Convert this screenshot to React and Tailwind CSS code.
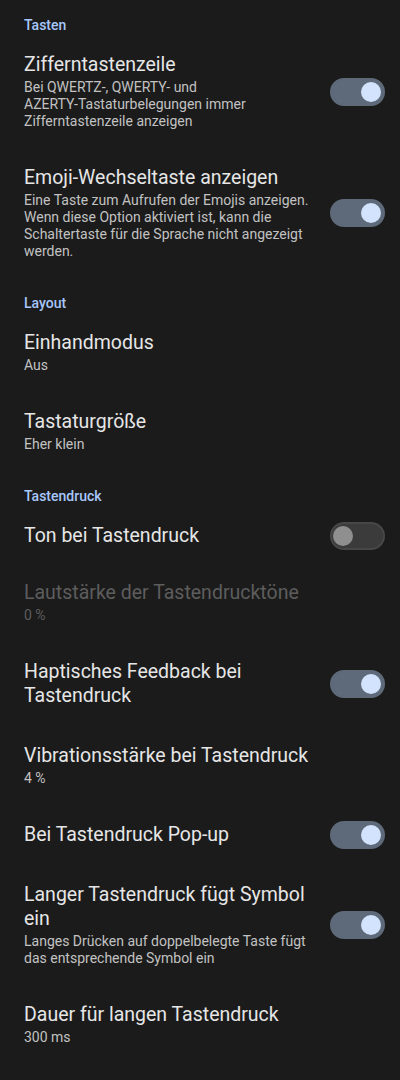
import React, { useState } from "react";

const sections = [
    {
        title: "Tasten",
        items: [
            {
                title: "Zifferntastenzeile",
                summary: (
                    <>
                        Bei QWERTZ-, QWERTY- und
                        <br />
                        AZERTY-Tastaturbelegungen immer Zifferntastenzeile anzeigen
                    </>
                ),
                toggle: true,
                on: true,
            },
            {
                title: "Emoji-Wechseltaste anzeigen",
                summary:
                    "Eine Taste zum Aufrufen der Emojis anzeigen. Wenn diese Option aktiviert ist, kann die Schaltertaste für die Sprache nicht angezeigt werden.",
                toggle: true,
                on: true,
            },
        ],
    },
    {
        title: "Layout",
        items: [
            { title: "Einhandmodus", summary: "Aus" },
            { title: "Tastaturgröße", summary: "Eher klein" },
        ],
    },
    {
        title: "Tastendruck",
        items: [
            { title: "Ton bei Tastendruck", toggle: true, on: false, tight: true },
            { title: "Lautstärke der Tastendrucktöne", summary: "0 %", disabled: true },
            { title: "Haptisches Feedback bei Tastendruck", toggle: true, on: true },
            { title: "Vibrationsstärke bei Tastendruck", summary: "4 %" },
            { title: "Bei Tastendruck Pop-up", toggle: true, on: true },
            {
                title: "Langer Tastendruck fügt Symbol ein",
                summary: "Langes Drücken auf doppelbelegte Taste fügt das entsprechende Symbol ein",
                toggle: true,
                on: true,
            },
            { title: "Dauer für langen Tastendruck", summary: "300 ms" },
        ],
    },
];

function Switch({ checked, onChange }) {
    return (
        <button
            type="button"
            onClick={onChange}
            className={
                "relative -my-[2px] h-[28px] w-[55px] shrink-0 rounded-full border-2 " +
                (checked ? "border-[#5e6979] bg-[#5e6979]" : "border-[#474747] bg-[#3b3b3b]")
            }
        >
            <span
                className={
                    "absolute top-1/2 h-[20px] w-[20px] -translate-y-1/2 rounded-full " +
                    (checked ? "right-[2px] bg-[#d3e3fd]" : "left-[1px] bg-[#8f8f8f]")
                }
            />
        </button>
    );
}

function PrefRow({ item }) {
    const [on, setOn] = useState(!!item.on);
    const titleColor = item.disabled ? "text-[#5d5d5d]" : "text-[#e6e6e6]";
    const summaryColor = item.disabled ? "text-[#5d5d5d]" : "text-[#c2c2c2]";

    return (
        <div className={"flex items-center pl-6 pr-[15px] pt-[18px] " + (item.tight ? "pb-[15px]" : "pb-[18px]")}>
            <div className="w-[290px] shrink-0">
                <div className={"text-[19.5px] leading-6 " + titleColor}>{item.title}</div>
                {item.summary && (
                    <div className={"mt-[2px] text-[14px] leading-[17px] " + summaryColor}>{item.summary}</div>
                )}
            </div>
            <div className="flex flex-1 justify-end">
                {item.toggle && <Switch checked={on} onChange={() => setOn(!on)} />}
            </div>
        </div>
    );
}

export default function App() {
    return (
        <div className="min-h-[1080px] w-[400px] bg-[#1b1b1b] font-['Roboto',sans-serif]">
            {sections.map((section) => (
                <div key={section.title}>
                    <div className="pl-6 pt-[15px] text-[14px] font-medium leading-5 text-[#a8c7fa]">
                        {section.title}
                    </div>
                    {section.items.map((item) => (
                        <PrefRow key={item.title} item={item} />
                    ))}
                </div>
            ))}
        </div>
    );
}
